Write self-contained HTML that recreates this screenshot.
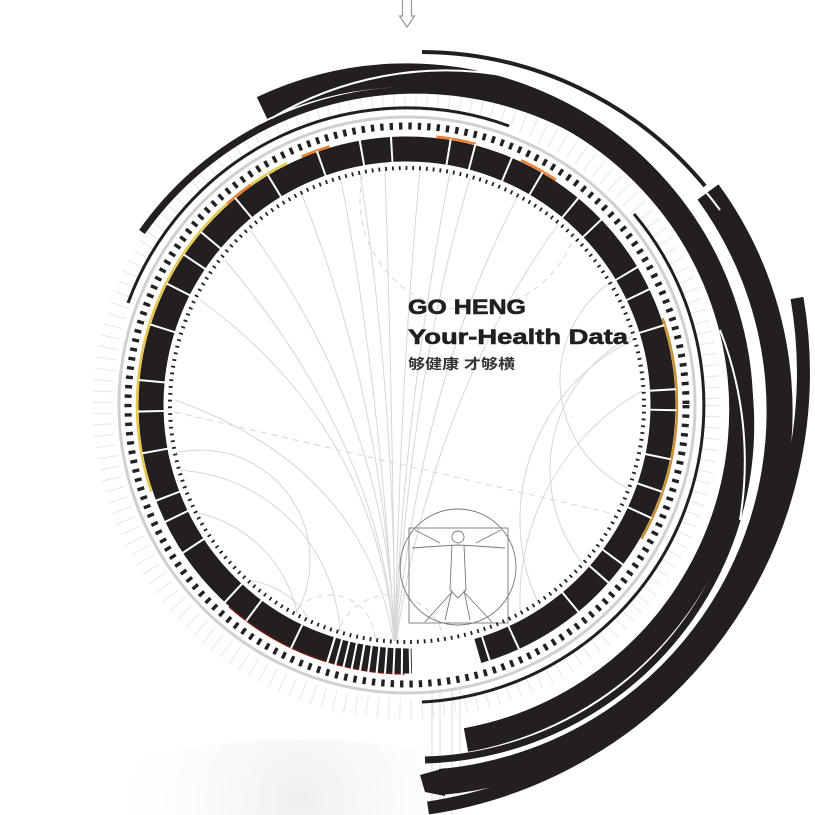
<!DOCTYPE html>
<html><head><meta charset="utf-8"><style>
html,body{margin:0;padding:0;background:#fff;width:815px;height:815px;overflow:hidden}
svg{display:block}
</style></head><body>
<svg width="815" height="815" viewBox="0 0 815 815" xmlns="http://www.w3.org/2000/svg">
<defs>
<radialGradient id="sh" cx="300" cy="800" r="200" gradientUnits="userSpaceOnUse">
<stop offset="0" stop-color="#efefef"/><stop offset="1" stop-color="#fff" stop-opacity="0"/>
</radialGradient>
<clipPath id="inner"><circle cx="407" cy="405" r="236"/></clipPath>
</defs>
<ellipse cx="300" cy="800" rx="220" ry="60" fill="url(#sh)"/>

<path d="M402.5 0 V16 H399.5 L407 27 L414.5 16 H411.5 V0" fill="none" stroke="#999" stroke-width="1.2"/>

<circle cx="407" cy="405" r="304" fill="none" stroke="#e6e6e6" stroke-width="20" stroke-dasharray="1 10"/>
<g stroke="#ddd" stroke-width="1">
<line x1="432" y1="690" x2="432" y2="815"/><line x1="440" y1="690" x2="440" y2="815"/><line x1="452" y1="690" x2="452" y2="815"/><line x1="460" y1="690" x2="460" y2="800"/>
</g>

<g clip-path="url(#inner)" fill="none" stroke="#d6d6d6" stroke-width="1">
<path d="M395 650 Q390 420 250 230"/><path d="M395 650 Q385 400 300 190"/>
<path d="M395 650 Q380 380 340 175"/><path d="M395 650 Q392 380 385 170"/>
<path d="M395 650 Q400 380 420 170"/><path d="M395 650 Q410 380 470 178"/>
<path d="M395 650 Q420 380 520 192"/><path d="M395 650 Q430 400 560 222"/>
<path d="M395 650 Q380 430 200 300"/><path d="M395 650 Q370 470 175 400"/>
<path d="M395 650 Q385 450 225 260"/><path d="M395 650 Q402 420 450 172"/>
<path d="M395 650 Q395 400 360 172"/>
<circle cx="170" cy="640" r="90"/><circle cx="170" cy="640" r="130"/><circle cx="170" cy="640" r="170"/>
<circle cx="200" cy="560" r="110"/><circle cx="150" cy="700" r="150"/><circle cx="240" cy="660" r="80"/>
<circle cx="700" cy="470" r="150"/><circle cx="720" cy="520" r="200"/><circle cx="680" cy="380" r="120"/>
<circle cx="760" cy="600" r="240"/>
<g stroke-dasharray="6 5">
<circle cx="470" cy="200" r="110"/><line x1="175" y1="412" x2="640" y2="520"/>
<circle cx="390" cy="650" r="55"/><circle cx="330" cy="640" r="45"/>
</g>
</g>

<g fill="none" stroke="#777" stroke-width="0.9">
<circle cx="458" cy="567" r="58"/>
<rect x="409" y="528" width="99" height="95"/>
<circle cx="458" cy="537" r="6"/>
<path d="M412 548 L440 546 L458 545 L476 546 L505 548"/>
<path d="M415 530 L440 543 M501 530 L476 543"/>
<path d="M452 545 L450 590 L458 598 L466 590 L464 545"/>
<path d="M452 590 L445 620 M464 590 L470 620 M452 592 L425 622 M464 592 L492 622"/>
</g>

<circle cx="407" cy="405" r="288" fill="none" stroke="#d0d0d0" stroke-width="3"/>
<circle cx="407" cy="405" r="279" fill="none" stroke="#222" stroke-width="7" stroke-dasharray="3.4 6"/>
<circle cx="407" cy="405" r="237" fill="none" stroke="#222" stroke-width="4" stroke-dasharray="1.8 5"/>

<g fill="none" stroke-width="2.5">
<circle cx="407" cy="405" r="270" stroke="#e8c84a" stroke-dasharray="300 1308" transform="rotate(180 407 405)"/>
<circle cx="407" cy="405" r="270" stroke="#ee8030" stroke-dasharray="30 1578" transform="rotate(247 407 405)"/>
<circle cx="407" cy="405" r="270" stroke="#ee8030" stroke-dasharray="40 1568" transform="rotate(295 407 405)"/>
<circle cx="407" cy="405" r="270" stroke="#c89030" stroke-dasharray="140 1468" transform="rotate(0 407 405)"/>
<circle cx="407" cy="405" r="269" stroke="#7a1a10" stroke-width="1.5" stroke-dasharray="110 1498" transform="rotate(108 407 405)"/>
</g>

<circle cx="407" cy="405" r="256" fill="none" stroke="#231f1e" stroke-width="25" stroke-dasharray="1541 67" transform="rotate(89 407 405)"/>
<circle cx="407" cy="405" r="256" fill="none" stroke="#fff" stroke-width="27" stroke-dasharray="2 40 2 28 2 55 2 22 2 35 2 60 2 18 2 45 2 30 2 25 2 50 2 20 2 38 2 65 2 28 2 42 2 22 2 55 2 30 2 35 2 48 2 25 2 60 2 32 2 20 2 45 2 38 2 28 2 52 2 40 2 30 2 25 2 44 2 36 2 50" transform="rotate(-60 407 405)"/>
<path d="M330 650 A256 256 0 0 0 412 661" fill="none" stroke="#fff" stroke-width="27" stroke-dasharray="2 6"/>

<g fill="none" stroke="#231f1e">
<path d="M128 303 A297 297 0 0 1 509 126" stroke-width="3"/>
<path d="M634 214 A297 297 0 0 1 422 702" stroke-width="3"/>
<path d="M142 232 A335 335 0 1 1 425 760" stroke-width="7"/>
<path d="M262 108 A335 335 0 1 1 466 740" stroke-width="24"/>
<path d="M422 52 A370 370 0 0 1 705 186" stroke-width="4"/>
<path d="M708 192 A372 372 0 0 1 440 782" stroke-width="26"/>
<path d="M797 298 A440 440 0 0 1 428 808" stroke-width="13"/>
</g>
<path d="M420 775 L445 768 L445 796 L425 792 Z" fill="#231f1e"/>
<g fill="none" stroke="#fff" stroke-width="2">
<path d="M272 118 A340 340 0 0 1 720 210"/>
<path d="M720 330 A360 360 0 0 1 740 520"/>
</g>

<g font-family="'Liberation Sans', Arial, sans-serif" font-weight="bold" fill="#231f1e" stroke="#231f1e" stroke-width="0.6">
<text x="408" y="314" font-size="21" textLength="118" lengthAdjust="spacingAndGlyphs">GO HENG</text>
<text x="408" y="344" font-size="21" textLength="220" lengthAdjust="spacingAndGlyphs">Your-Health Data</text>
</g>
<text x="408" y="369" font-family="'Liberation Sans','Noto Sans CJK SC',sans-serif" font-size="14" font-weight="bold" fill="#333" textLength="107" lengthAdjust="spacingAndGlyphs">够健康 才够横</text>
</svg>
</body></html>
